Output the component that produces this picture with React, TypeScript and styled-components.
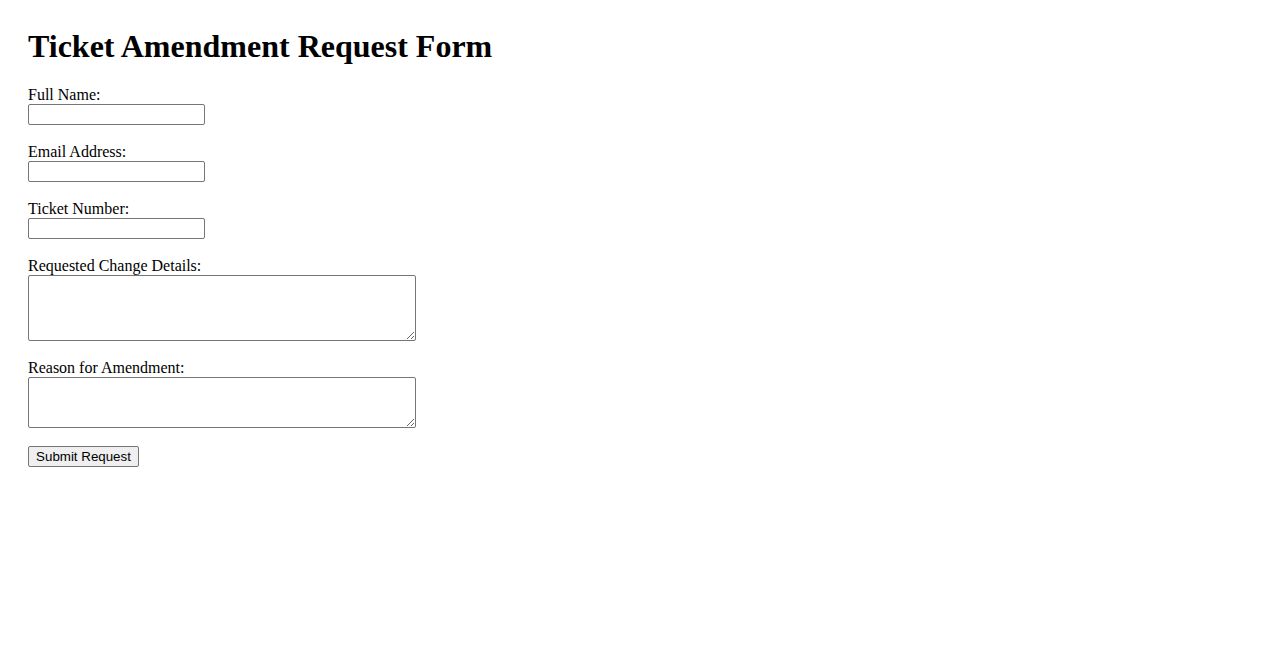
import React from "react";
import styled, { createGlobalStyle } from "styled-components";

const GlobalStyle = createGlobalStyle`
  html, body {
    margin: 0;
    padding: 0;
    background: #ffffff;
  }
  body {
    font-family: "Liberation Serif", "Times New Roman", serif;
    font-size: 16px;
    color: #000000;
  }
`;

const Page = styled.div`
  padding: 28px;
`;

const Title = styled.h1`
  margin: 0 0 21px 0;
  font-family: "Liberation Serif", "Times New Roman", serif;
  font-size: 32px;
  font-weight: bold;
  line-height: 37px;
`;

const Form = styled.form`
  display: flex;
  flex-direction: column;
  align-items: flex-start;
`;

const Field = styled.div`
  display: flex;
  flex-direction: column;
  align-items: flex-start;
  margin-bottom: 18px;
`;

const Label = styled.label`
  display: block;
  height: 18px;
  line-height: 18px;
  font-size: 16px;
`;

const TextInput = styled.input`
  box-sizing: border-box;
  width: 177px;
  height: 21px;
  margin: 0;
  padding: 1px 2px;
  border: 1px solid #767676;
  border-radius: 2px;
  background: #ffffff;
  font-family: "Liberation Sans", Arial, sans-serif;
  font-size: 13.333px;
`;

const TextArea = styled.textarea<{ $height: number }>`
  box-sizing: border-box;
  width: 388px;
  height: ${(p) => p.$height}px;
  margin: 0;
  padding: 2px;
  border: 1px solid #767676;
  border-radius: 2px;
  background: #ffffff;
  font-family: "Liberation Mono", monospace;
  font-size: 13.333px;
  resize: both;
`;

const SubmitButton = styled.button`
  box-sizing: border-box;
  width: 111px;
  height: 21px;
  margin: 0;
  padding: 1px 6px;
  border: 1px solid #767676;
  border-radius: 2px;
  background: #efefef;
  color: #000000;
  font-family: "Liberation Sans", Arial, sans-serif;
  font-size: 13.333px;
  line-height: 17px;
  white-space: nowrap;
`;

export default function App() {
  return (
    <>
      <GlobalStyle />
      <Page>
        <Title>Ticket Amendment Request Form</Title>
        <Form onSubmit={(e) => e.preventDefault()}>
          <Field>
            <Label htmlFor="fullName">Full Name:</Label>
            <TextInput id="fullName" type="text" />
          </Field>
          <Field>
            <Label htmlFor="email">Email Address:</Label>
            <TextInput id="email" type="email" />
          </Field>
          <Field>
            <Label htmlFor="ticket">Ticket Number:</Label>
            <TextInput id="ticket" type="text" />
          </Field>
          <Field>
            <Label htmlFor="details">Requested Change Details:</Label>
            <TextArea id="details" $height={66} />
          </Field>
          <Field>
            <Label htmlFor="reason">Reason for Amendment:</Label>
            <TextArea id="reason" $height={51} />
          </Field>
          <SubmitButton type="submit">Submit Request</SubmitButton>
        </Form>
      </Page>
    </>
  );
}
